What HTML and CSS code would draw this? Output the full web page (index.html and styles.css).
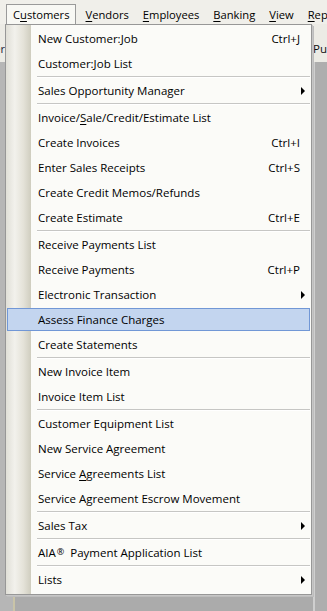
FILE: index.html
```html
<!DOCTYPE html>
<html>
<head>
<meta charset="utf-8">
<link rel="stylesheet" href="styles.css">
</head>
<body>
<div class="app">
  <div class="menubar">
    <span class="mb-item mb-open">C<u>u</u>stomers</span>
    <span class="mb-item"><u>V</u>endors</span>
    <span class="mb-item"><u>E</u>mployees</span>
    <span class="mb-item"><u>B</u>anking</span>
    <span class="mb-item"><u>V</u>iew</span>
    <span class="mb-item"><u>R</u>eports</span>
  </div>
  <div class="toolbar">
    <span class="tb-left">Order</span>
    <span class="tb-fill"></span>
    <span class="tb-right">Purchase</span>
  </div>
  <div class="workspace">
    <div class="ws-left"></div>
    <div class="ws-stripe"></div>
    <div class="ws-main"></div>
    <div class="ws-edge"></div>
    <div class="ws-right"></div>
  </div>

  <div class="dropdown">
    <div class="strip"></div>
    <ul class="items">
      <li class="item"><span class="label">New Customer:Job</span><span class="key">Ctrl+J</span></li>
      <li class="item"><span class="label">Customer:Job List</span></li>
      <li class="sep"></li>
      <li class="item"><span class="label">Sales Opportunity Manager</span><span class="arrow"></span></li>
      <li class="sep"></li>
      <li class="item"><span class="label">Invoice/<u>S</u>ale/Credit/Estimate List</span></li>
      <li class="item"><span class="label">Create Invoices</span><span class="key">Ctrl+I</span></li>
      <li class="item"><span class="label">Enter Sales Receipts</span><span class="key">Ctrl+S</span></li>
      <li class="item"><span class="label">Create Credit Memos/Refunds</span></li>
      <li class="item"><span class="label">Create Estimate</span><span class="key">Ctrl+E</span></li>
      <li class="sep"></li>
      <li class="item"><span class="label">Receive Payments List</span></li>
      <li class="item"><span class="label">Receive Payments</span><span class="key">Ctrl+P</span></li>
      <li class="item"><span class="label">Electronic Transaction</span><span class="arrow"></span></li>
      <li class="item active"><span class="label">Assess Finance Charges</span></li>
      <li class="item"><span class="label">Create Statements</span></li>
      <li class="sep"></li>
      <li class="item"><span class="label">New Invoice Item</span></li>
      <li class="item"><span class="label">Invoice Item List</span></li>
      <li class="sep"></li>
      <li class="item"><span class="label">Customer Equipment List</span></li>
      <li class="item"><span class="label">New Service Agreement</span></li>
      <li class="item"><span class="label">Service <u>A</u>greements List</span></li>
      <li class="item"><span class="label">Service Agreement Escrow Movement</span></li>
      <li class="sep"></li>
      <li class="item"><span class="label">Sales Tax</span><span class="arrow"></span></li>
      <li class="sep"></li>
      <li class="item"><span class="label">AIA<span class="reg">®</span> Payment Application List</span></li>
      <li class="sep"></li>
      <li class="item"><span class="label">Lists</span><span class="arrow"></span></li>
    </ul>
  </div>
</div>
</body>
</html>
```
FILE: styles.css
```css
* { box-sizing: border-box; }
html, body { margin: 0; padding: 0; }
body {
  width: 327px;
  height: 611px;
  overflow: hidden;
  background: #ababab;
  font-family: "Open Sans", "Noto Sans", sans-serif;
  font-size: 11.5px;
  font-weight: 500;
  color: #000;
}
.app {
  position: relative;
  width: 327px;
  height: 611px;
  display: flex;
  flex-direction: column;
}
u { text-decoration: underline; text-underline-offset: 2px; text-decoration-thickness: 1px; }

.menubar {
  height: 24px;
  background: #f0efea;
  display: flex;
  align-items: flex-end;
  padding-left: 6px;
  white-space: nowrap;
  flex: none;
  overflow: hidden;
  font-size: 11.2px;
}
.mb-item {
  height: 20px;
  line-height: 19px;
  padding: 0 6px;
  border: 1px solid transparent;
  border-bottom: 0;
}
.mb-open {
  background: #f8f8f4;
  border-color: #9a9a9a;
  padding: 0 5px 0 6px;
  margin-right: 3px;
  position: relative;
  z-index: 2;
}

.toolbar {
  height: 38px;
  background: #ecebe5;
  display: flex;
  align-items: center;
  padding-top: 10px;
  flex: none;
  white-space: nowrap;
  overflow: hidden;
}
.tb-left {
  width: 5px;
  overflow: hidden;
  direction: rtl;
  display: block;
  font-size: 11px;
  color: #223;
}
.tb-fill { flex: 1; }
.tb-right {
  width: 14px;
  overflow: hidden;
  font-size: 11.5px;
  color: #111;
}

.workspace {
  flex: 1;
  display: flex;
}
.ws-left { width: 13px; background: #b6b6b6; }
.ws-stripe { width: 2px; background: #c9c4a8; }
.ws-main { flex: 1; background: #ababab; }
.ws-edge { width: 2px; background: #cfcfcf; }
.ws-right { width: 12px; background: #aeaeae; }

.dropdown {
  position: absolute;
  left: 5px;
  top: 24px;
  width: 307px;
  height: 571px;
  background: #fbfbf8;
  border: 1px solid #979797;
  box-shadow: 1px 1px 0 #c6c6c6, 2px 2px 0 #bdbdbd;
  padding: 1px 1px 2px 0;
  display: flex;
}
.strip {
  position: absolute;
  left: 0;
  top: 0;
  bottom: 0;
  width: 25px;
  background: linear-gradient(to right, #e0dfd7 0%, #f2f1ec 35%, #e4e2d8 70%, #cfcdbf 100%);
}
.items {
  list-style: none;
  margin: 0;
  padding: 0;
  flex: 1;
  position: relative;
}
.item {
  height: 25px;
  line-height: 25px;
  display: flex;
  align-items: center;
  padding-left: 32px;
  padding-right: 10px;
  white-space: nowrap;
}
.label { flex: 1; }
.key { text-align: right; }
.arrow {
  width: 0;
  height: 0;
  border-top: 4px solid transparent;
  border-bottom: 4px solid transparent;
  border-left: 4px solid #000;
  margin-right: -5px;
}
.reg { font-size: 9px; position: relative; top: -2px; margin: 0 3px 0 1px; }
.sep {
  height: 2px;
  margin-left: 31px;
  border-top: 1px solid #c6c6c4;
  border-bottom: 1px solid #ffffff;
}
.active {
  margin: 0 0 0 1px;
  padding-left: 31px;
  height: 25px;
  position: relative;
}
.active::before {
  content: "";
  position: absolute;
  left: 0;
  right: 0;
  top: 1px;
  bottom: 1px;
  background: #c3d5ef;
  border: 1px solid #7197d6;
  z-index: 0;
}
.active .label { position: relative; z-index: 1; }
```
